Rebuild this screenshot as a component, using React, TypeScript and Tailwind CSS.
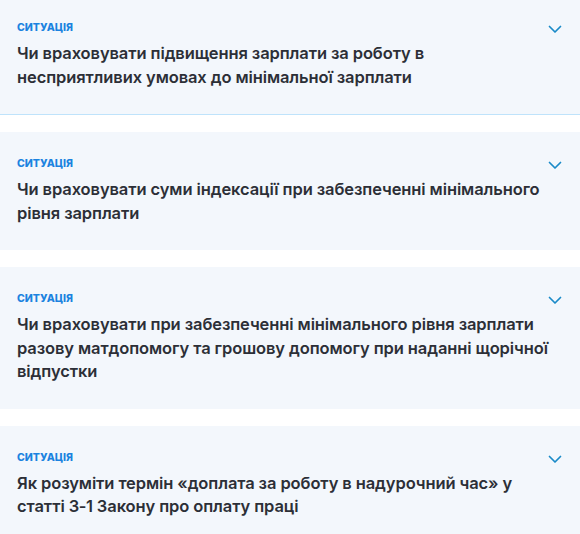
const items = [
  {
    lines: ["Чи враховувати підвищення зарплати за роботу в", "несприятливих умовах до мінімальної зарплати"],
    active: true,
  },
  {
    lines: ["Чи враховувати суми індексації при забезпеченні мінімального", "рівня зарплати"],
  },
  {
    lines: [
      "Чи враховувати при забезпеченні мінімального рівня зарплати",
      "разову матдопомогу та грошову допомогу при наданні щорічної",
      "відпустки",
    ],
  },
  {
    lines: ["Як розуміти термін «доплата за роботу в надурочний час» у", "статті 3‑1 Закону про оплату праці"],
  },
];

const Chevron = () => (
  <svg width="14" height="9" viewBox="0 0 14 9" fill="none" className="absolute right-[18px] top-[29px]">
    <path d="M1.5 1.5L7 7L12.5 1.5" stroke="#1a8ac8" strokeWidth="1.7" strokeLinecap="round" strokeLinejoin="round" />
  </svg>
);

export default function App() {
  return (
    <div className="w-[580px] h-[534px] overflow-hidden bg-white" style={{ fontFamily: "Inter, 'Noto Sans', sans-serif" }}>
      <div className="-mt-1 flex flex-col gap-[17px]">
        {items.map((item, i) => (
          <div
            key={i}
            className={`relative bg-[#f3f7fc] pl-[17px] pr-[8px] pt-[25px] pb-[25px] ${
              item.active ? "border-b border-[#bfe3fb]" : ""
            }`}
          >
            <div className="text-[10.5px] leading-[14px] font-extrabold text-[#1b83e0]">СИТУАЦІЯ</div>
            <div className="mt-[7px] text-[16.5px] leading-[23.5px] font-semibold tracking-[-0.1px] text-[#2c2f37]">
              {item.lines.map((line, j) => (
                <span key={j} className="block">
                  {line}
                </span>
              ))}
            </div>
            <Chevron />
          </div>
        ))}
      </div>
    </div>
  );
}
